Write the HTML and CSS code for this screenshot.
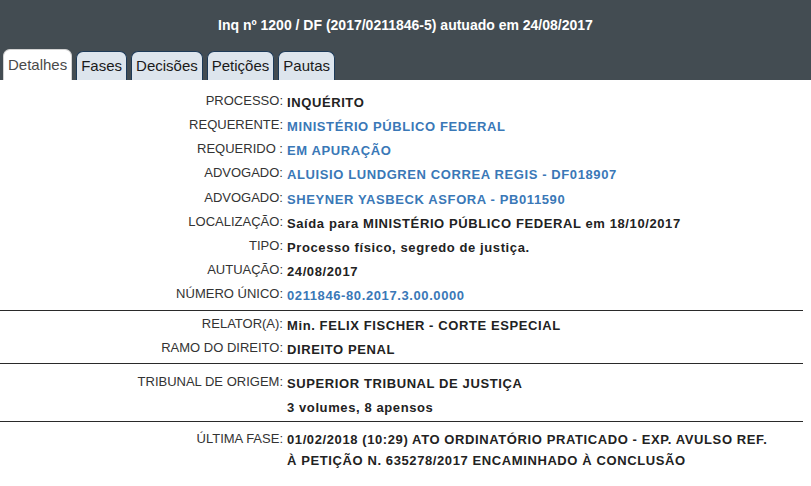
FILE: index.html
```html
<!DOCTYPE html>
<html lang="pt">
<head>
<meta charset="utf-8">
<title>Inq nº 1200 / DF</title>
<link rel="stylesheet" href="styles.css">
</head>
<body>
<div class="header">
  <h1 class="title">Inq nº 1200 / DF (2017/0211846-5) autuado em 24/08/2017</h1>
  <ul class="tabs">
    <li class="tab active">Detalhes</li>
    <li class="tab">Fases</li>
    <li class="tab">Decisões</li>
    <li class="tab">Petições</li>
    <li class="tab">Pautas</li>
  </ul>
</div>
<div class="content">
  <div class="section s1">
    <div class="label">PROCESSO:</div><div class="value">INQUÉRITO</div>
    <div class="label">REQUERENTE:</div><div class="value link">MINISTÉRIO PÚBLICO FEDERAL</div>
    <div class="label">REQUERIDO :</div><div class="value link">EM APURAÇÃO</div>
    <div class="label">ADVOGADO:</div><div class="value link">ALUISIO LUNDGREN CORREA REGIS - DF018907</div>
    <div class="label">ADVOGADO:</div><div class="value link">SHEYNER YASBECK ASFORA - PB011590</div>
    <div class="label">LOCALIZAÇÃO:</div><div class="value">Saída para MINISTÉRIO PÚBLICO FEDERAL em 18/10/2017</div>
    <div class="label">TIPO:</div><div class="value">Processo físico, segredo de justiça.</div>
    <div class="label">AUTUAÇÃO:</div><div class="value">24/08/2017</div>
    <div class="label">NÚMERO ÚNICO:</div><div class="value link">0211846-80.2017.3.00.0000</div>
  </div>
  <div class="section s2">
    <div class="label">RELATOR(A):</div><div class="value">Min. FELIX FISCHER - CORTE ESPECIAL</div>
    <div class="label">RAMO DO DIREITO:</div><div class="value">DIREITO PENAL</div>
  </div>
  <div class="section s3">
    <div class="label">TRIBUNAL DE ORIGEM:</div><div class="value">SUPERIOR TRIBUNAL DE JUSTIÇA</div>
    <div class="label"></div><div class="value">3 volumes, 8 apensos</div>
  </div>
  <div class="section s4">
    <div class="label">ÚLTIMA FASE:</div><div class="value multi">01/02/2018 (10:29) ATO ORDINATÓRIO PRATICADO - EXP. AVULSO REF.<br>À PETIÇÃO N. 635278/2017 ENCAMINHADO À CONCLUSÃO</div>
  </div>
</div>
</body>
</html>
```
FILE: styles.css
```css
html, body {
  margin: 0;
  padding: 0;
  background: #ffffff;
  font-family: "Liberation Sans", Arial, sans-serif;
}

.header {
  background: #434c52;
  height: 80px;
  display: flex;
  flex-direction: column;
  justify-content: space-between;
}

.title {
  margin: 0;
  padding-top: 17px;
  color: #ffffff;
  font-size: 14px;
  font-weight: bold;
  text-align: center;
  line-height: 16px;
}

.tabs {
  list-style: none;
  margin: 0;
  padding: 0 0 0 3px;
  display: flex;
  align-items: flex-end;
  gap: 4px;
}

.tab {
  font-size: 15px;
  line-height: 18px;
  height: 29px;
  box-sizing: border-box;
  padding: 5px 4px 0 4px;
  background: #dde5ed;
  color: #1a1a1a;
  border: 1px solid #1d3a58;
  border-bottom: none;
  border-radius: 7px 7px 0 0;
}

.tab.active {
  height: 31px;
  padding-top: 6px;
  background: #ffffff;
  color: #4a4a4a;
  border-color: #d3d3d3;
}

.content {
  width: 99%;
}

.section {
  display: grid;
  grid-template-columns: 283px 1fr;
  column-gap: 4px;
  grid-auto-rows: 24px;
  border-bottom: 1px solid #2a2a2a;
}

.label {
  text-align: right;
  font-size: 13px;
  line-height: 20px;
  color: #333333;
  white-space: nowrap;
}

.value {
  font-size: 13px;
  font-weight: bold;
  letter-spacing: 0.6px;
  line-height: 20px;
  padding-top: 2px;
  color: #222222;
  white-space: nowrap;
}

.value.link {
  color: #3a78b7;
}

.s1 {
  grid-auto-rows: 24.125px;
  padding-top: 11px;
  padding-bottom: 2px;
}

.s2 {
  padding-top: 3px;
  padding-bottom: 1px;
}

.s3 {
  padding-top: 8px;
  padding-bottom: 1px;
}

.s4 {
  border-bottom: none;
  padding-top: 7px;
  grid-auto-rows: auto;
}

.value.multi {
  line-height: 21px;
  padding-top: 0;
}
```
